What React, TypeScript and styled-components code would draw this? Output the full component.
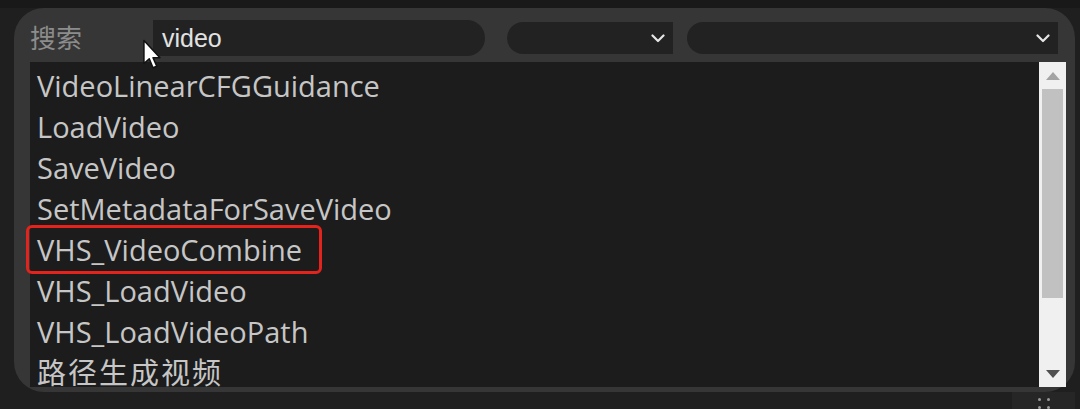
import styled, { createGlobalStyle } from 'styled-components';

const GlobalStyle = createGlobalStyle`
  html, body {
    margin: 0;
    padding: 0;
    background: #1e1e1e;
    overflow: hidden;
  }
  * { box-sizing: border-box; }
`;

const Page = styled.div`
  width: 1080px;
  height: 409px;
  display: flex;
  flex-direction: column;
  background: #1f1f1f;
  position: relative;
  font-family: 'Noto Sans', 'Noto Sans CJK SC', sans-serif;
`;

const TopStrip = styled.div`
  height: 8px;
  background: #191919;
`;

const Dialog = styled.div`
  margin-left: 14px;
  width: 1061px;
  height: 384px;
  background: #363636;
  border-radius: 30px;
  padding: 12px 9px 5px 16px;
  display: flex;
  flex-direction: column;
  gap: 6px;
`;

const Header = styled.div`
  display: flex;
  align-items: center;
  height: 36px;
  padding-right: 8px;
`;

const Label = styled.div`
  width: 123px;
  color: #8c8c8c;
  font-size: 26px;
  line-height: 36px;
`;

const SearchInput = styled.div`
  width: 332px;
  height: 36px;
  background: #222222;
  border-radius: 0 18px 18px 0;
  color: #e2e2e2;
  font-family: 'Liberation Sans', Arial, sans-serif;
  font-size: 25px;
  line-height: 36px;
  padding-left: 9px;
`;

const Select = styled.div<{ $w: number; $ml: number }>`
  width: ${({ $w }) => $w}px;
  margin-left: ${({ $ml }) => $ml}px;
  height: 32px;
  background: #222222;
  border-radius: 16px 0 0 16px;
  display: flex;
  align-items: center;
  justify-content: flex-end;
  padding-right: 8px;
`;

const Body = styled.div`
  flex: 1;
  display: flex;
  min-height: 0;
`;

const List = styled.div`
  flex: 1;
  background: #1c1c1c;
  padding-top: 3px;
  clip-path: inset(0 0 0 -12px);
`;

const Item = styled.div<{ $marked?: boolean; $cjk?: boolean }>`
  height: 41px;
  line-height: 41px;
  padding: 0 ${({ $marked }) => ($marked ? 16 : 7)}px 0 7px;
  color: #c6c6c6;
  font-family: 'Open Sans', 'Noto Sans CJK SC', sans-serif;
  font-size: 29px;
  letter-spacing: ${({ $cjk }) => ($cjk ? '2px' : '0')};
  white-space: nowrap;
  width: ${({ $marked }) => ($marked ? 'fit-content' : 'auto')};
  outline: ${({ $marked }) => ($marked ? '3px solid #e3231c' : 'none')};
  outline-offset: 1px;
  border-radius: 2px;
`;

const Scrollbar = styled.div`
  width: 27px;
  background: #f0f0f0;
  display: flex;
  flex-direction: column;
  align-items: center;
`;

const ArrowCell = styled.div`
  height: 27px;
  width: 100%;
  display: flex;
  align-items: center;
  justify-content: center;
`;

const Thumb = styled.div`
  width: 21px;
  height: 209px;
  background: #c1c1c1;
`;

const Track = styled.div`
  flex: 1;
`;

const Bottom = styled.div`
  flex: 1;
  display: flex;
  justify-content: flex-end;
  padding-right: 5px;
`;

const Corner = styled.div`
  width: 63px;
  background: #262626;
  display: flex;
  justify-content: center;
  padding: 6px 0 0 0;
`;

const Dots = styled.div`
  display: grid;
  grid-template-columns: 3px 3px;
  gap: 5px 6px;
  span {
    width: 3px;
    height: 3px;
    background: #9a9a9a;
    border-radius: 50%;
  }
`;

const Pointer = styled.svg`
  position: absolute;
  left: 142px;
  top: 39px;
`;

const Chevron = () => (
  <svg width="14" height="9" viewBox="0 0 14 9">
    <polyline points="1.5,1.5 7,7 12.5,1.5" fill="none" stroke="#e6e6e6" strokeWidth="2.2" strokeLinecap="round" strokeLinejoin="round" />
  </svg>
);

const items = [
  'VideoLinearCFGGuidance',
  'LoadVideo',
  'SaveVideo',
  'SetMetadataForSaveVideo',
  'VHS_VideoCombine',
  'VHS_LoadVideo',
  'VHS_LoadVideoPath',
  '路径生成视频',
];

export default function App() {
  return (
    <Page>
      <GlobalStyle />
      <TopStrip />
      <Dialog>
        <Header>
          <Label>搜索</Label>
          <SearchInput>video</SearchInput>
          <Select $w={166} $ml={22}>
            <Chevron />
          </Select>
          <Select $w={371} $ml={14}>
            <Chevron />
          </Select>
        </Header>
        <Body>
          <List>
            {items.map((t) => (
              <Item key={t} $marked={t === 'VHS_VideoCombine'} $cjk={/[\u4e00-\u9fff]/.test(t)}>
                {t}
              </Item>
            ))}
          </List>
          <Scrollbar>
            <ArrowCell>
              <svg width="14" height="8" viewBox="0 0 14 8">
                <polygon points="0,8 14,8 7,0" fill="#a3a3a3" />
              </svg>
            </ArrowCell>
            <Thumb />
            <Track />
            <ArrowCell>
              <svg width="14" height="8" viewBox="0 0 14 8">
                <polygon points="0,0 14,0 7,8" fill="#505050" />
              </svg>
            </ArrowCell>
          </Scrollbar>
        </Body>
      </Dialog>
      <Bottom>
        <Corner>
          <Dots>
            <span />
            <span />
            <span />
            <span />
          </Dots>
        </Corner>
      </Bottom>
      <Pointer width="22" height="32" viewBox="0 0 20 30">
        <path d="M1.5 1.5 L1.5 23 L6.5 18.5 L10 27 L13.5 25.5 L10 17.5 L16.5 17.5 Z" fill="#ffffff" stroke="#111" strokeWidth="1.4" strokeLinejoin="round" />
      </Pointer>
    </Page>
  );
}
